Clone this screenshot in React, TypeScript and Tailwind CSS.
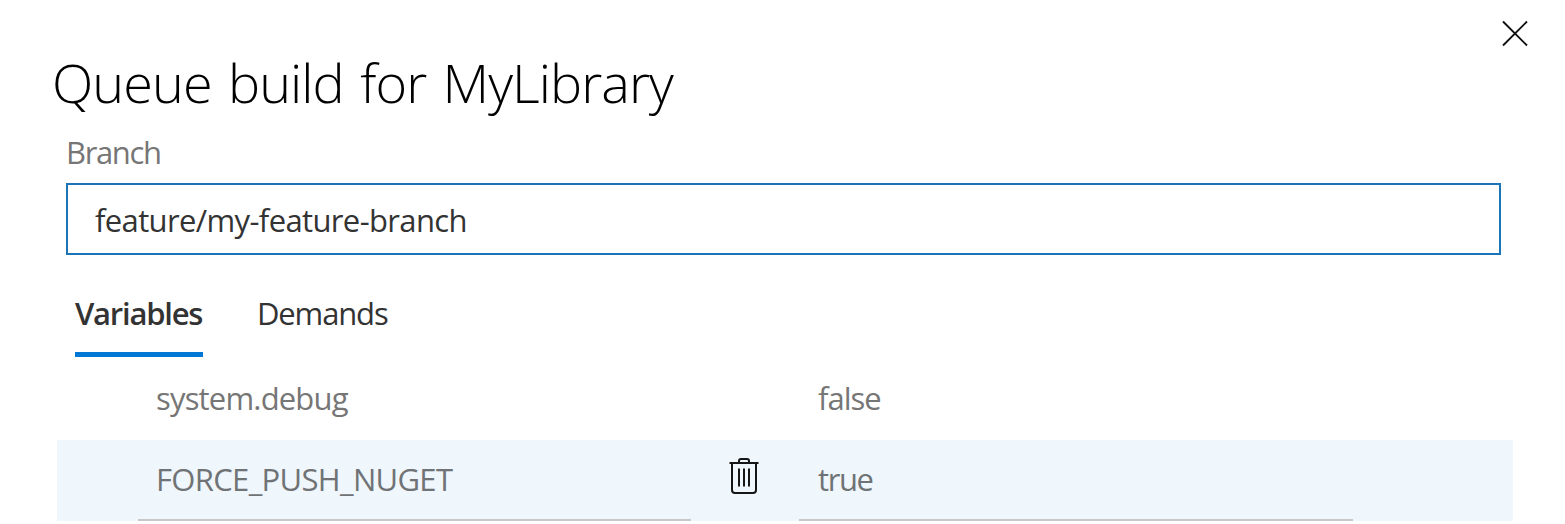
import React from 'react';

function CloseIcon() {
  return (
    <svg width="28" height="28" viewBox="0 0 28 28" fill="none" stroke="#111" strokeWidth="1.9">
      <path d="M2 1.500 26 25.500M26 1.500 2 25.500" />
    </svg>
  );
}

function TrashIcon() {
  return (
    <svg width="30" height="38" viewBox="0 0 30 38" fill="none" stroke="#161616" strokeWidth="2">
      <path d="M0.500 6H29.500M3 6V33Q3 36 6 36H24Q27 36 27 33V6M10 6V4Q10 2 12 2H18Q20 2 20 4V6M10 11.500V29.500M15 11.500V29.500M20 11.500V29.500" />
    </svg>
  );
}

export default function App() {
  return (
    <main className="h-[524px] w-[1565px] overflow-hidden bg-white font-['Open_Sans','Noto_Sans',sans-serif] text-[31px] leading-10 text-[#333]">
      <header className="flex h-[118px] items-start justify-between pr-9 pl-[52px]">
        <h1 className="mt-[46px] text-[54px] leading-[72px] font-light whitespace-nowrap text-black">
          <span className="tracking-[-0.95px] [word-spacing:3.3px]">Queue build for MyLibrary</span>
        </h1>
        <button aria-label="Close" className="mt-5">
          <CloseIcon />
        </button>
      </header>

      <section className="pt-[14px] pr-16 pl-[66px]">
        <div className="flex h-[51px] items-start text-[#767676]">
          <span className="tracking-[-1.35px]">Branch</span>
        </div>
        <div className="flex h-[72px] items-center border-2 border-[#1b74b8] pt-0.5 pl-[27px]">
          <span className="tracking-[-0.63px]">feature/my-feature-branch</span>
        </div>
      </section>

      <nav className="flex h-[105px] items-start gap-[54px] pt-[38px] pl-[75px]">
        <div className="flex h-16 w-32 items-start border-b-[5px] border-[#0078d4] font-semibold whitespace-nowrap">
          <span className="tracking-[-1.23px]">Variables</span>
        </div>
        <span className="tracking-[-1.15px]">Demands</span>
      </nav>

      <section className="mr-[52px] ml-[57px] text-[#767676]">
        <div className="flex h-20 pt-[18px] pl-[99px]">
          <div className="w-[662px]">
            <span className="tracking-[-0.82px]">system.debug</span>
          </div>
          <span className="tracking-[-1px]">false</span>
        </div>
        <div className="flex h-[81px] bg-[#eff6fc] pl-[81px] text-[#6f7375]">
          <div className="w-[553px] border-b-2 border-[#c8c8c8] pt-[19px] pl-[18px]">
            <span className="tracking-[-0.67px]">FORCE_PUSH_NUGET</span>
          </div>
          <div className="flex w-[108px] pt-[17px] pl-[38px]">
            <TrashIcon />
          </div>
          <div className="w-[554px] border-b-2 border-[#c8c8c8] pt-[19px] pl-[19px]">
            <span className="tracking-[-1.4px]">true</span>
          </div>
        </div>
      </section>
    </main>
  );
}
